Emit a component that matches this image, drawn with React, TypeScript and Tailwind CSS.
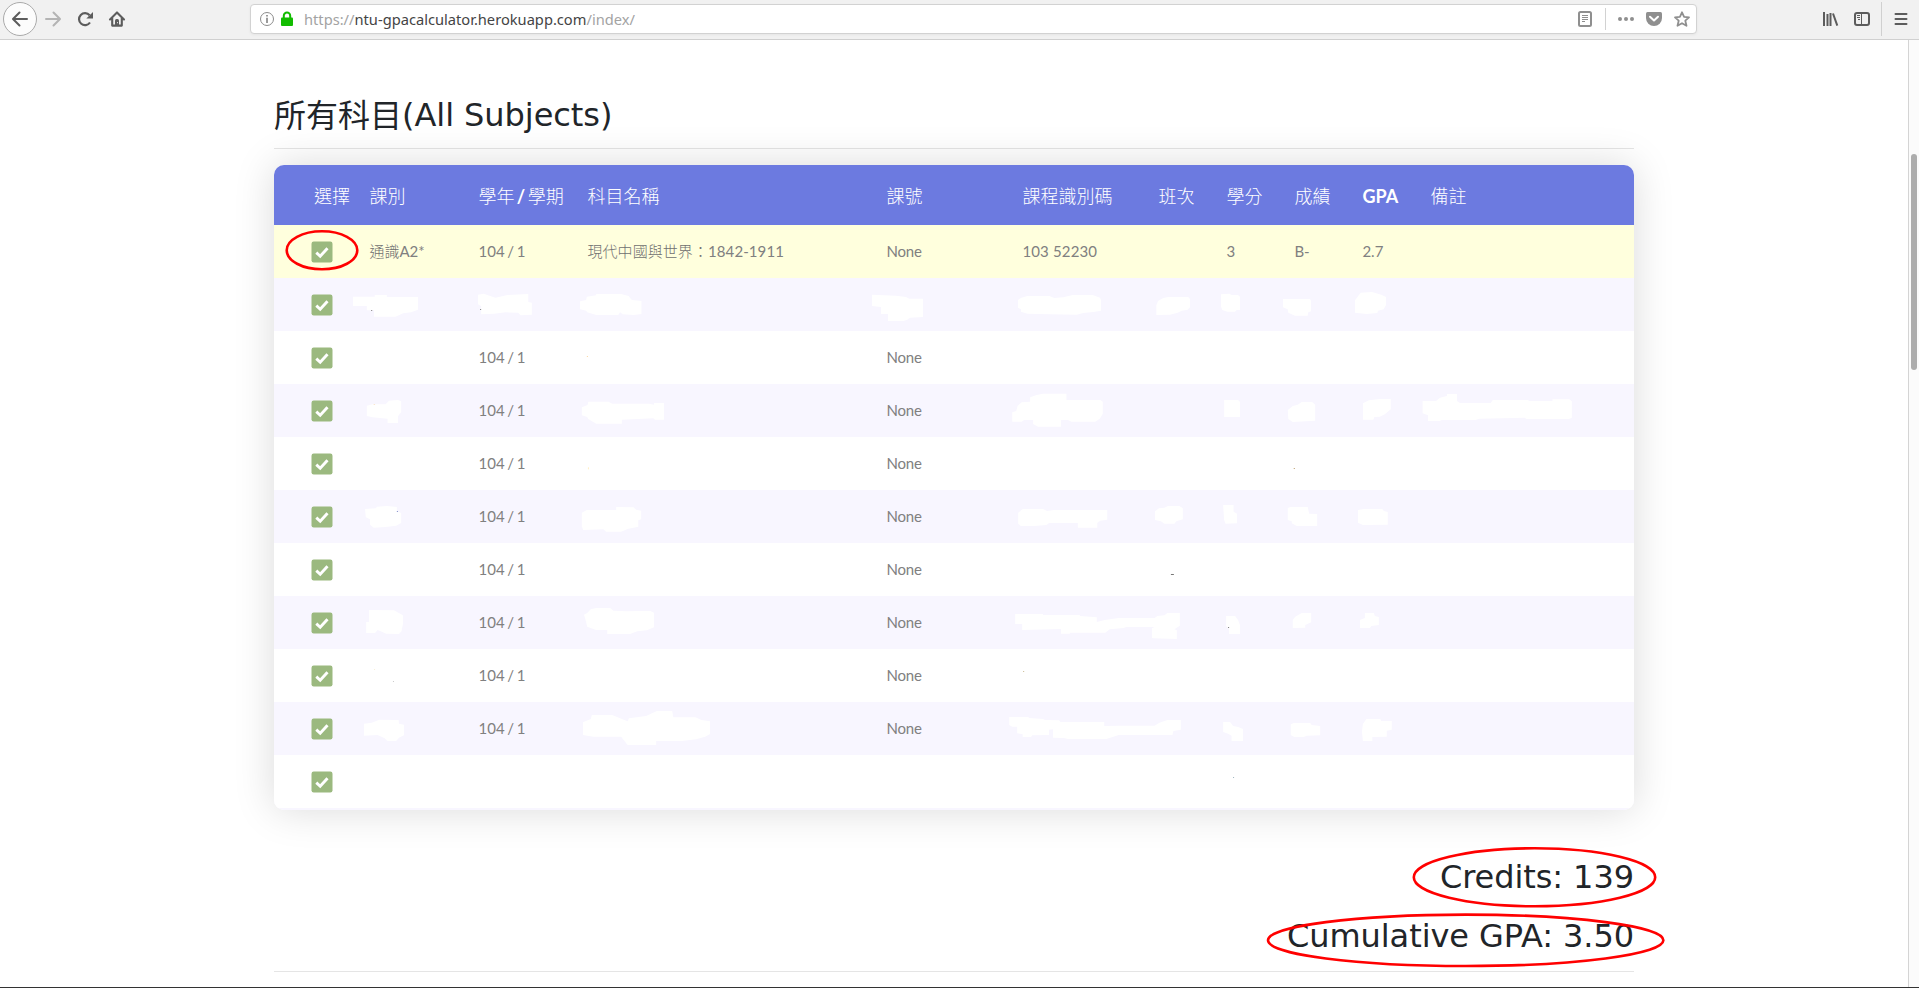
import React from "react";

const COLS =
  "grid grid-cols-[95px_109px_109px_299px_136px_136px_68px_68px_68px_68px_1fr] items-center";
const CELL_FONT = "font-['Lato','Noto_Sans_CJK_TC',sans-serif]";

const headers = ["選擇", "課別", "學年 / 學期", "科目名稱", "課號", "課程識別碼", "班次", "學分", "成績", "GPA", "備註"];

const rows: string[][] = [
  ["通識A2*", "104 / 1", "現代中國與世界：1842-1911", "None", "103 52230", "", "3", "B-", "2.7", ""],
  [],
  ["", "104 / 1", "", "None"],
  ["", "104 / 1", "", "None"],
  ["", "104 / 1", "", "None"],
  ["", "104 / 1", "", "None"],
  ["", "104 / 1", "", "None"],
  ["", "104 / 1", "", "None"],
  ["", "104 / 1", "", "None"],
  ["", "104 / 1", "", "None"],
  [],
];

/* Latin runs keep the table's own weight; CJK runs are set light. */
function MixedText({ text, latin, cjk }: { text: string; latin: string; cjk: string }) {
  return (
    <>
      {text.split(/([\x20-\x7e]+)/).map((part, i) => (
        <span key={i} className={/^[\x20-\x7e]+$/.test(part) ? latin : cjk}>{part}</span>
      ))}
    </>
  );
}

const columnTracking = [
  "",
  "tracking-[0.1px] [word-spacing:-1.4px]",
  "tracking-[0.08px]",
  "tracking-[-0.2px]",
  "tracking-[0.15px]",
  "", "", "", "", "",
];

function CheckBox() {
  return (
    <svg className="ml-[37px] block size-[22px]" viewBox="0 0 22 22">
      <rect x="0.5" y="0.5" width="21" height="21" rx="2.2" fill="#9bb97f" />
      <path d="M5.3 11.6 L9.2 15.2 L16.5 7.2" fill="none" stroke="#fff" strokeWidth="2.9" />
    </svg>
  );
}

/* Erased areas of the table, grouped by the tile they were traced in. */
function Erased() {
  return (
    <svg className="pointer-events-none absolute inset-0 h-full w-full" viewBox="274 165 1360 645" fill="#fff">
      <g transform="translate(264 150) scale(.35714 .33333)">
        <path d="M249 440H310V435H344V441H431V479L412 487L390 490L368 500H308V481H288V468H249Z" />
        <path d="M599 434L615 431L648 443L682 435L740 432V456L750 458V494L718 496L712 488L676 487L645 491L608 493V468L599 463Z" />
        <path d="M885 454L902 450L904 440L930 436V432H1000L1021 438L1030 450L1057 453V492L1035 495L1004 493L997 487L992 495H930L905 487L902 482L885 478Z" />
        <rect x="300" y="480" width="3" height="3" fill="#888" />
        <rect x="605" y="477" width="3" height="3" fill="#888" />
        <rect x="904" y="618" width="3" height="3" fill="#fbd9a5" />
      </g>
      <g transform="translate(820 150) scale(.33333)">
        <path d="M156 434L228 437L258 441L268 446H309V501L270 503L262 509L250 513H204V492H183V471L156 468Z" />
        <path d="M594 450L602 444L622 438H688L703 444L730 442L758 435H818L840 443L843 450V482L820 486L790 489L770 494L690 493L622 491L603 485V478L594 473Z" />
        <path d="M1009 466L1014 453L1030 444L1045 441H1105L1110 447V472L1103 479L1085 482L1073 488L1050 494L1009 495Z" />
        <path d="M1203 433L1228 431L1235 435H1254L1260 440V480H1250L1245 485H1222L1207 480L1203 470Z" />
        <path d="M1389 447H1470L1473 452V484L1465 487L1463 497H1425L1405 488L1403 478L1389 472Z" />
      </g>
      <g transform="translate(1240 150) scale(.33333)">
        <path d="M345 451L362 428L396 426L424 434L438 441V465L431 478L414 482L412 489L380 492L345 488Z" />
      </g>
      <g transform="translate(264 350) scale(.35714 .33333)">
        <path d="M288 167L304 163H340L350 152L375 150L384 154V187L375 199V219H346V206L304 202L288 198Z" />
        <path d="M890 172L906 165L908 155H965L975 161H1078L1092 164V159H1120V209H1095L1090 205L1002 209V221H930L908 207L905 201L890 196Z" />
        <path d="M283 477L313 475L316 470L345 468L372 471V484L384 489V519L370 527L340 531L307 533L297 524V508L285 502Z" />
        <path d="M890 488L904 480H986V471L1035 472L1042 479L1056 482V508L1048 511V530L1020 536L1000 545H958L950 538L894 540L890 530Z" />
        <rect x="307" y="162" width="4" height="2" fill="#f7ddb8" />
        <rect x="372" y="483" width="3" height="3" fill="#8793ca" />
        <rect x="907" y="352" width="3" height="6" fill="#fff0c8" />
      </g>
      <g transform="translate(860 350) scale(.49744 .33333)">
        <path d="M306 187L314 183L317 167L325 157L342 155V142L355 135L368 131H415V150H483L488 155V191L482 206L473 215H425L418 210H404V230H358L348 222V210H330L325 215H306Z" />
        <path d="M732 150H760L764 156V201H732Z" />
        <path d="M860 180L870 168L880 164L888 156H909L915 164V212L870 216L861 207Z" />
        <path d="M1011 160L1023 151L1045 147H1067V178L1055 193L1045 200L1034 201L1032 209H1011Z" />
        <path d="M1131 153H1158L1166 143L1180 138V132H1200V153L1206 159H1268L1272 150H1344V153H1392V148H1426L1431 154V203L1425 207H1340L1336 203L1245 206L1237 210L1170 210L1165 213H1142V196L1131 190Z" />
        <path d="M318 488L327 477H368L376 483L390 480H497V509L483 512L477 519V533H438V519H380L375 525L350 528H323L318 521Z" />
        <path d="M593 484L601 475L612 473L619 468H642L649 475V508L636 514L632 521H612L605 514L593 510Z" />
        <path d="M730 465H751V485L758 491V520L735 521L732 510Z" />
        <path d="M860 474L865 471H900L903 491L919 492V528H878L868 520V514L860 510Z" />
        <path d="M1001 480L1013 477H1050L1053 483L1061 486V524L1011 525L1001 518Z" />
        <rect x="872" y="354" width="2" height="3" fill="#b79865" />
        <rect x="625" y="672" width="6" height="3" fill="#777" />
      </g>
      <g transform="translate(264 580) scale(.35714 .33333)">
        <path d="M294 90L364 91L389 106V132L385 154L378 162L342 161L330 155L318 150L311 159H286V126H294Z" />
        <path d="M896 104L905 99L915 88L930 84H970L978 92L1015 94L1050 93H1082L1092 98V142L1072 151L1045 154L1025 162H961V150H930L905 140L902 126Z" />
        <path d="M280 431L302 428L323 419L377 420L378 431L392 434V466L378 473L370 483H345L338 475L318 465L280 467Z" />
        <path d="M893 427L915 417L918 405H975L1002 417L1018 424L1022 415L1070 408L1100 393H1143L1146 412H1208L1225 420L1249 424V462L1235 470L1210 478L1170 483H1098V495H1018L1000 470H922L893 465Z" />
        <rect x="308" y="267" width="3" height="2" fill="#f4e8c8" />
        <rect x="361" y="303" width="3" height="3" fill="#ccc" />
      </g>
      <g transform="translate(860 580) scale(.49744 .33333)">
        <path d="M312 102H368V105H442V108L476 112V126L492 120L520 114H592L598 108L612 106L618 99H643V137L632 148L637 151V177L590 175L587 173V145L592 141H535L530 144L502 148L493 158H422V161H404V147L326 150V132H312Z" />
        <path d="M736 108H754L760 120L764 136V162H742V147L736 138Z" />
        <path d="M870 120L875 110L888 99H907V127L895 135V143L870 144Z" />
        <path d="M1005 120L1015 114V99H1033L1035 108L1043 111V135L1028 138L1025 144H1005Z" />
        <path d="M300 411H338L340 414L368 417L372 420L400 421L403 426H491V438L520 437H592L602 428L618 420H645V449L630 453L628 465H520L508 471L495 477H418L410 474L388 473V448L380 449V465L346 466L344 471H327V463L316 460V440H306L300 435Z" />
        <path d="M730 426H744L750 438L760 441L770 447V483H747V467L740 461L730 456Z" />
        <path d="M866 433L872 429H905L908 435L925 438V466L898 467L892 471H873L866 465Z" />
        <path d="M1011 432L1018 417H1046L1048 423H1069V449L1059 452V470L1030 471V483H1011L1009 455Z" />
        <rect x="740" y="141" width="2" height="3" fill="#777" />
        <rect x="328" y="273" width="2" height="3" fill="#c9b98f" />
        <rect x="750" y="591" width="2" height="3" fill="#9db3bd" />
      </g>
    </svg>
  );
}

function Toolbar() {
  return (
    <header className="flex h-10 items-start border-b border-[#d0d0d0] bg-[#f1f1f1]">
      <svg className="h-[39px] w-[250px] shrink-0" viewBox="0 0 250 39" fill="none">
        <circle cx="20" cy="19" r="16.5" fill="#fcfcfc" stroke="#aaa" />
        <path d="M27 19H13.5M19.5 12.5L13 19L19.5 25.5" stroke="#5c5c5c" strokeWidth="2" strokeLinecap="round" strokeLinejoin="round" />
        <path d="M46 19H59.5M53.5 12.5L60 19L53.5 25.5" stroke="#b4b4b4" strokeWidth="2" strokeLinecap="round" strokeLinejoin="round" />
        <path d="M90 22.5A6 6 0 1 1 89.6 15.2" stroke="#5c5c5c" strokeWidth="2.2" />
        <path d="M93 12V18.5H86.3Z" fill="#5c5c5c" />
        <path d="M110 19.5L117 12.4L124 19.5M112.2 18V25.6H121.8V18" stroke="#5c5c5c" strokeWidth="2.1" strokeLinecap="round" strokeLinejoin="round" />
        <path d="M115 26V20.5Q115 19 116.5 19H117.5Q119 19 119 20.5V26Z" fill="#5c5c5c" />
        <path d="M117.5 22.2V23.2" stroke="#f1f1f1" />
      </svg>
      <div className="mt-1 flex h-[30px] w-[1447px] shrink-0 items-center rounded-[4px] border border-[#d2d2d2] bg-white shadow-[0_1px_3px_rgba(0,0,0,0.05)]">
        <svg className="ml-[8px] h-[28px] w-[45px] shrink-0" viewBox="0 0 45 28" fill="none">
          <circle cx="8" cy="14" r="6.5" stroke="#8c8c8c" />
          <path d="M8 12.8V18M8 10V11.6" stroke="#7a7a7a" strokeWidth="1.5" />
          <rect x="22" y="12.5" width="12" height="8.5" rx="1" fill="#12bc00" />
          <path d="M24.8 13V10.8A3.2 3.2 0 0 1 31.2 10.8V13" stroke="#12bc00" strokeWidth="2" />
        </svg>
        <div className="text-[14.67px] leading-[28px] whitespace-pre text-[#a3a3a3] font-['Noto_Sans',sans-serif]">
          https://<span className="text-[#444]">ntu-gpacalculator.herokuapp.com</span>/index/
        </div>
        <svg className="ml-auto h-[28px] w-[124px] shrink-0" viewBox="1572 5 124 28" fill="none">
          <rect x="1579" y="12" width="12" height="14" rx="1.5" stroke="#8f8f8f" strokeWidth="2" />
          <path d="M1582 15.5H1588M1582 17.5H1588M1582 19.5H1588M1582 21.5H1585" stroke="#8f8f8f" />
          <path d="M1605.5 8V30" stroke="#d2d2d2" />
          <g fill="#8f8f8f">
            <circle cx="1620" cy="19" r="2" /><circle cx="1626" cy="19" r="2" /><circle cx="1632" cy="19" r="2" />
            <path d="M1647.5 12H1660.5Q1662 12 1662 13.5V18A8 8 0 0 1 1646 18V13.5Q1646 12 1647.5 12Z" />
          </g>
          <path d="M1650 16.8L1654 20.5L1658 16.8" stroke="#fff" strokeWidth="2" strokeLinecap="round" strokeLinejoin="round" />
          <path d="M1682 12.3L1684.1 16.9L1689 17.4L1685.3 20.7L1686.5 25.8L1682 23.2L1677.5 25.8L1678.7 20.7L1675 17.4L1679.9 16.9Z" stroke="#8f8f8f" strokeWidth="1.8" strokeLinejoin="round" />
        </svg>
      </div>
      <svg className="h-[39px] w-[222px] shrink-0" viewBox="1697 0 222 39" fill="none" stroke="#5c5c5c">
        <path d="M1824 12V26M1827.5 14V26M1830.5 13V26M1833 13.5L1837.3 25.7" strokeWidth="2" />
        <rect x="1855" y="13" width="14" height="12" rx="2" strokeWidth="2" />
        <path d="M1861.5 13V25M1857 15.5H1860M1857 17.5H1860M1858 19.5H1860" />
        <path d="M1881.5 2V36" stroke="#d0d0d0" />
        <path d="M1895.5 14H1906.5M1895.5 19H1906.5M1895.5 24H1906.5" strokeWidth="2" strokeLinecap="round" />
      </svg>
    </header>
  );
}

export default function App() {
  return (
    <div className="relative flex h-[988px] w-[1919px] flex-col overflow-hidden border-b border-[#333] bg-white">
      <Toolbar />
      <div className="flex min-h-0 flex-1">
        <main className="min-w-0 flex-1 pl-[274px]">
          <div className="w-[1360px]">
            <h2 className="flex h-[109px] items-end border-b border-black/10 pb-[14px] text-[32px] leading-[38px] text-[#212529]">
              <span className="mb-[2px] font-normal font-['Noto_Sans_CJK_TC',sans-serif]">所有科目</span>
              <span className="tracking-[-0.05px] font-['DejaVu_Sans',sans-serif]">(All Subjects)</span>
            </h2>
            <div className={`relative mt-[16px] h-[645px] rounded-[10px] shadow-[0_0_40px_rgba(0,0,0,0.15)] ${CELL_FONT}`}>
              <div className="h-full overflow-hidden rounded-[10px] bg-[#f8f6ff]">
                <div className={`${COLS} h-[60px] bg-[#6c7ae0] pt-[2px] text-[18px] leading-[25px] text-white [word-spacing:-1.9px]`}>
                  {headers.map((h, i) => (
                    <div key={h} className={i === 0 ? "pl-10" : "pl-[0.4px] whitespace-nowrap"}>
                      <MixedText text={h} latin="font-bold whitespace-pre" cjk="font-light" />
                    </div>
                  ))}
                </div>
                {rows.map((cells, r) => (
                  <div
                    key={r}
                    className={`${COLS} h-[53px] text-[15px] leading-[21px] text-[#808080] ${
                      r === 0 ? "bg-[#ffffdd]" : r % 2 ? "bg-[#f8f6ff]" : "bg-white"
                    }`}
                  >
                    <CheckBox />
                    {cells.map((c, i) => (
                      <div key={i} className={`pl-[0.4px] whitespace-nowrap ${columnTracking[i]}`}>
                        <MixedText text={c} latin="whitespace-pre" cjk="font-light text-[#707070]" />
                      </div>
                    ))}
                  </div>
                ))}
              </div>
              <Erased />
            </div>
            <div className="mt-[48px] flex flex-col items-end border-b border-black/10 pb-[16px] text-[32px] leading-[38px] tracking-[-0.07px] text-[#212529] font-['DejaVu_Sans',sans-serif]">
              <div>Credits: 139</div>
              <div className="mt-[21px]">Cumulative GPA: 3.50</div>
            </div>
          </div>
        </main>
        <aside className="w-[11px] border-l border-[#d4d4d4] bg-[#fbfbfb] pt-[114px] pl-[2px]">
          <div className="h-[216px] w-[6px] rounded-full bg-[#adadad]" />
        </aside>
      </div>
      <svg className="pointer-events-none absolute top-0 left-0 h-[987px] w-[1919px]" viewBox="0 0 1919 987" fill="none" stroke="#f00" strokeWidth="2.6">
        <ellipse cx="322" cy="250.3" rx="35.3" ry="19" />
        <ellipse cx="1534.5" cy="877.3" rx="120.7" ry="29" />
        <ellipse cx="1465.7" cy="940.3" rx="197.7" ry="25.7" />
      </svg>
    </div>
  );
}
